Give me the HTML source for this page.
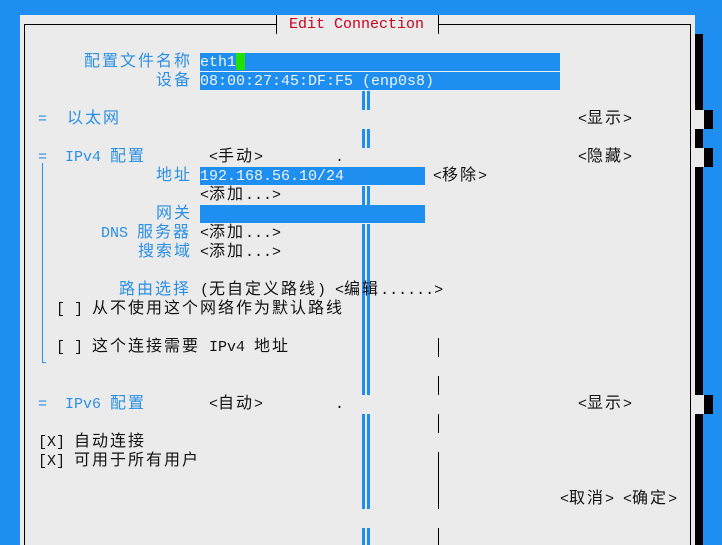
<!DOCTYPE html>
<html><head><meta charset="utf-8"><style>
*{margin:0;padding:0}
body{width:722px;height:545px;background:#1e8ff0;position:relative;overflow:hidden;font-family:"Liberation Mono","Noto Sans CJK SC",monospace;font-size:15px}
.a{position:absolute}
.t{position:absolute;line-height:19px;height:19px;white-space:pre;color:#111}
.b{color:#2a8fe6}
.c{letter-spacing:2px;font-size:16px}
.f{position:absolute;background:#1e8ff0;height:18px;border-bottom:1px solid #e8f0f8}
.w{color:#eef3f8}
</style></head><body>
<div class="a" style="left:20px;top:15px;width:675px;height:530px;background:#ebebeb"></div>
<div class="a" style="left:695px;top:34px;width:8px;height:511px;background:#000"></div>
<div class="a" style="left:695px;top:110px;width:9px;height:19px;background:#ebebeb"></div>
<div class="a" style="left:704px;top:110px;width:9px;height:19px;background:#000"></div>
<div class="a" style="left:695px;top:148px;width:9px;height:19px;background:#ebebeb"></div>
<div class="a" style="left:704px;top:148px;width:9px;height:19px;background:#000"></div>
<div class="a" style="left:695px;top:395px;width:9px;height:19px;background:#ebebeb"></div>
<div class="a" style="left:704px;top:395px;width:9px;height:19px;background:#000"></div>
<div class="a" style="left:24px;top:24px;width:1px;height:521px;background:#000"></div>
<div class="a" style="left:690px;top:24px;width:1px;height:521px;background:#000"></div>
<div class="a" style="left:24px;top:24px;width:252px;height:1px;background:#000"></div>
<div class="a" style="left:438px;top:24px;width:253px;height:1px;background:#000"></div>
<div class="a" style="left:276px;top:15px;width:1px;height:19px;background:#000"></div>
<div class="a" style="left:438px;top:15px;width:1px;height:19px;background:#000"></div>
<div class="t" style="left:289px;top:15px;color:#c8001e">Edit Connection</div>
<div class="a" style="left:362px;top:90px;width:3px;height:20px;background:#1e8ff0"></div><div class="a" style="left:367px;top:90px;width:3px;height:20px;background:#1e8ff0"></div>
<div class="a" style="left:362px;top:129px;width:3px;height:19px;background:#1e8ff0"></div><div class="a" style="left:367px;top:129px;width:3px;height:19px;background:#1e8ff0"></div>
<div class="a" style="left:362px;top:167px;width:3px;height:228px;background:#1e8ff0"></div><div class="a" style="left:367px;top:167px;width:3px;height:228px;background:#1e8ff0"></div>
<div class="a" style="left:362px;top:414px;width:3px;height:95px;background:#1e8ff0"></div><div class="a" style="left:367px;top:414px;width:3px;height:95px;background:#1e8ff0"></div>
<div class="a" style="left:362px;top:528px;width:3px;height:17px;background:#1e8ff0"></div><div class="a" style="left:367px;top:528px;width:3px;height:17px;background:#1e8ff0"></div>
<div class="a" style="left:438px;top:338px;width:1px;height:19px;background:#000"></div>
<div class="a" style="left:438px;top:376px;width:1px;height:19px;background:#000"></div>
<div class="a" style="left:438px;top:414px;width:1px;height:19px;background:#000"></div>
<div class="a" style="left:438px;top:452px;width:1px;height:57px;background:#000"></div>
<div class="a" style="left:438px;top:528px;width:1px;height:17px;background:#000"></div>
<div class="a" style="left:42px;top:163px;width:1px;height:200px;background:#2a8fe6"></div>
<div class="a" style="left:42px;top:362px;width:4px;height:1px;background:#2a8fe6"></div>
<div class="f" style="left:200px;top:53px;width:360px"></div>
<div class="f" style="left:200px;top:72px;width:360px"></div>
<div class="a" style="left:236px;top:53px;width:9px;height:17px;background:#22e000"></div>
<div class="f" style="left:200px;top:167px;width:225px"></div>
<div class="f" style="left:200px;top:205px;width:225px"></div>
<div class="t w" style="left:200px;top:53px">eth1</div>
<div class="t w" style="left:200px;top:72px">08:00:27:45:DF:F5 (enp0s8)</div>
<div class="t w" style="left:200px;top:167px">192.168.56.10/24</div>

<div class="t b c" style="left:84px;top:53px">配置文件名称</div>
<div class="t b c" style="left:156px;top:72px">设备</div>
<div class="t b" style="left:38px;top:110px">=</div>
<div class="t b c" style="left:67px;top:110px">以太网</div>
<div class="t" style="left:578px;top:110px">&lt;<span class="c">显示</span>&gt;</div>
<div class="t b" style="left:38px;top:148px">=</div>
<div class="t b" style="left:65px;top:148px">IPv4 <span class="c">配置</span></div>
<div class="t" style="left:209px;top:148px">&lt;<span class="c">手动</span>&gt;</div>
<div class="t" style="left:335px;top:148px">.</div>
<div class="t" style="left:578px;top:148px">&lt;<span class="c">隐藏</span>&gt;</div>
<div class="t b c" style="left:156px;top:167px">地址</div>
<div class="t" style="left:433px;top:167px">&lt;<span class="c">移除</span>&gt;</div>
<div class="t" style="left:200px;top:186px">&lt;<span class="c">添加</span>...&gt;</div>
<div class="t b c" style="left:156px;top:205px">网关</div>
<div class="t b" style="left:101px;top:224px">DNS <span class="c">服务器</span></div>
<div class="t" style="left:200px;top:224px">&lt;<span class="c">添加</span>...&gt;</div>
<div class="t b c" style="left:138px;top:243px">搜索域</div>
<div class="t" style="left:200px;top:243px">&lt;<span class="c">添加</span>...&gt;</div>
<div class="t b c" style="left:119px;top:281px">路由选择</div>
<div class="t" style="left:200px;top:281px">(<span class="c">无自定义路线</span>) &lt;<span class="c">编辑</span>......&gt;</div>
<div class="t" style="left:56px;top:300px">[ ] <span class="c">从不使用这个网络作为默认路线</span></div>
<div class="t" style="left:56px;top:338px">[ ] <span class="c">这个连接需要</span> IPv4 <span class="c">地址</span></div>
<div class="t b" style="left:38px;top:395px">=</div>
<div class="t b" style="left:65px;top:395px">IPv6 <span class="c">配置</span></div>
<div class="t" style="left:209px;top:395px">&lt;<span class="c">自动</span>&gt;</div>
<div class="t" style="left:335px;top:395px">.</div>
<div class="t" style="left:578px;top:395px">&lt;<span class="c">显示</span>&gt;</div>
<div class="t" style="left:38px;top:433px">[X] <span class="c">自动连接</span></div>
<div class="t" style="left:38px;top:452px">[X] <span class="c">可用于所有用户</span></div>
<div class="t" style="left:560px;top:490px">&lt;<span class="c">取消</span>&gt; &lt;<span class="c">确定</span>&gt;</div>
</body></html>
